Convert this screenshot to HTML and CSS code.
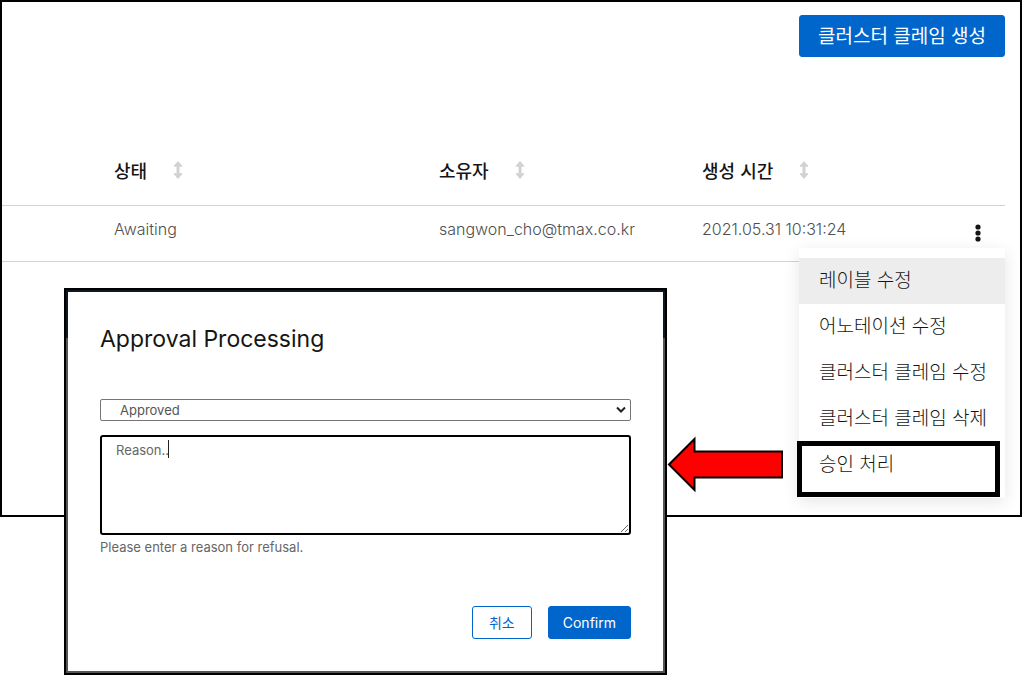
FILE: index.html
```html
<!DOCTYPE html>
<html lang="ko">
<head>
<meta charset="utf-8">
<meta name="viewport" content="width=device-width, initial-scale=1">
<title>클러스터 클레임</title>
<link rel="stylesheet" href="styles.css">
</head>
<body>
<main class="stage">
  <section class="panel">
    <div class="toolbar">
      <button class="btn btn-create" type="button">클러스터 클레임 생성</button>
    </div>
    <table class="claims">
      <colgroup><col class="col-lead"><col class="col-status"><col class="col-owner"><col><col class="col-menu"></colgroup>
      <thead>
        <tr>
          <th></th>
          <th scope="col"><span class="head">상태<svg class="sort" viewBox="0 0 10 18" aria-hidden="true"><path d="M5 .5 9 5.200H6V12.800H9L5 17.500 1 12.800H4V5.200H1Z"/></svg></span></th>
          <th scope="col"><span class="head">소유자<svg class="sort" viewBox="0 0 10 18" aria-hidden="true"><path d="M5 .5 9 5.200H6V12.800H9L5 17.500 1 12.800H4V5.200H1Z"/></svg></span></th>
          <th scope="col"><span class="head">생성 시간<svg class="sort" viewBox="0 0 10 18" aria-hidden="true"><path d="M5 .5 9 5.200H6V12.800H9L5 17.500 1 12.800H4V5.200H1Z"/></svg></span></th>
          <th></th>
        </tr>
      </thead>
      <tbody>
        <tr>
          <td></td>
          <td>Awaiting</td>
          <td>sangwon_cho@tmax.co.kr</td>
          <td>2021.05.31 10:31:24</td>
          <td class="actions">
            <button class="kebab" type="button" aria-label="작업"><svg viewBox="0 0 6 18" aria-hidden="true"><circle cx="3" cy="3" r="2.600"/><circle cx="3" cy="9" r="2.600"/><circle cx="3" cy="15" r="2.600"/></svg></button>
            <div class="menu">
              <button class="item item-hover" type="button">레이블 수정</button>
              <button class="item" type="button">어노테이션 수정</button>
              <button class="item" type="button">클러스터 클레임 수정</button>
              <button class="item" type="button">클러스터 클레임 삭제</button>
              <button class="item" type="button">승인 처리</button>
              <span class="marker"></span>
            </div>
          </td>
        </tr>
      </tbody>
    </table>
  </section>

  <svg class="arrow" viewBox="0 0 116 56" aria-hidden="true"><path d="M2 28.500 27.500 3V15.500H115V41.500H27.500V54Z"/></svg>

  <form class="dialog">
    <h1 class="title">Approval Processing</h1>
    <div class="select-wrap">
      <select class="select" aria-label="Approval"><option>Approved</option><option>Rejected</option></select>
      <svg class="chevron" viewBox="0 0 10 8" aria-hidden="true"><path d="M1 1.500 5 5.500 9 1.500"/></svg>
    </div>
    <div class="reason-wrap">
      <textarea class="reason" id="reason">Reason..</textarea>
      <span class="caret"></span>
    </div>
    <label class="hint" for="reason">Please enter a reason for refusal.</label>
    <div class="footer">
      <button class="btn btn-cancel" type="button">취소</button>
      <button class="btn btn-confirm" type="button">Confirm</button>
    </div>
  </form>
</main>
</body>
</html>
```
FILE: styles.css
```css
* { box-sizing: border-box; }

body {
  margin: 0;
  background: #fff;
  color: #151515;
  font-family: Inter, "Noto Sans CJK KR", sans-serif;
}

button, select, textarea { font: inherit; }

.stage { position: relative; min-height: 676px; }

.panel {
  min-height: 517px;
  padding: 13px 15px 0 0;
  border: 2px solid #000;
}

.toolbar { display: flex; justify-content: flex-end; }

.btn {
  border: 1px solid #06c;
  border-radius: 3px;
  background: #06c;
  color: #fff;
}

.btn-create {
  height: 42px;
  padding: 0 18px 2px;
  font: 400 19px/24px "Noto Sans CJK KR", sans-serif;
}

.claims {
  width: 100%;
  margin-top: 79px;
  table-layout: fixed;
  border-collapse: collapse;
}

.col-lead { width: 96px; }
.col-status { width: 325px; }
.col-owner { width: 263px; }
.col-menu { width: 54px; }

.claims th, .claims td {
  padding: 0 0 0 16px;
  border-bottom: 1px solid #d2d2d2;
  text-align: left;
  white-space: nowrap;
}

.claims th {
  height: 69px;
  font: 500 18px/24px "Noto Sans CJK KR", sans-serif;
}

.claims td {
  height: 56px;
  padding-bottom: 8px;
  color: #4f4f4f;
  font-size: 16px;
  font-weight: 300;
}

.head { display: flex; align-items: center; gap: 26px; }
.sort { width: 10px; height: 18px; fill: #d2d2d2; stroke: #d2d2d2; stroke-linejoin: round; }

.claims .actions { position: relative; padding: 0; text-align: center; }

.kebab {
  padding: 4px 8px;
  border: 0;
  background: none;
  line-height: 0;
}

.kebab svg { width: 6px; height: 18px; fill: #151515; }

.menu {
  position: absolute;
  top: 42px;
  right: 0;
  padding: 10px 0;
  background: #fff;
  box-shadow: 0 4px 16px rgba(3, 3, 3, .1);
}

.item {
  display: block;
  width: 100%;
  height: 46px;
  padding: 0 18px 3px 20px;
  border: 0;
  background: #fff;
  color: #151515;
  font: 300 19px/24px "Noto Sans CJK KR", sans-serif;
  text-align: left;
}

.item-hover { background: #ededed; }

.marker {
  position: absolute;
  left: -2px;
  right: 5px;
  bottom: 1px;
  height: 56px;
  border: 5px solid #000;
}

.arrow {
  position: absolute;
  top: 436px;
  left: 667px;
  width: 116px;
  height: 56px;
  fill: #f00;
  stroke: #000;
  stroke-width: 2;
}

.dialog {
  position: absolute;
  top: 288px;
  left: 64px;
  width: 59%;
  padding: 34px 34px 34px;
  border: 2px solid #000;
  background: #fff;
  box-shadow: inset 0 0 0 2px #555;
}

.dialog::before {
  content: "";
  position: absolute;
  inset: 0 0 auto;
  height: 46px;
  border: 2px solid #0f1722;
  border-bottom: 0;
}

.title { margin: 0; font-size: 23px; font-weight: 400; line-height: 30px; }

.select-wrap { position: relative; margin-top: 45px; }

.select {
  display: block;
  width: 100%;
  height: 22px;
  padding: 0 19px;
  border: 1px solid #767676;
  border-radius: 2px;
  background: #fff;
  color: #555;
  font-size: 13px;
  line-height: 20px;
  appearance: none;
}

.chevron {
  position: absolute;
  top: 7px;
  right: 5px;
  width: 10px;
  height: 8px;
  fill: none;
  stroke: #222;
  stroke-width: 2;
  pointer-events: none;
}

.reason-wrap { position: relative; margin-top: 14px; }

.reason {
  display: block;
  width: 100%;
  height: 100px;
  padding: 4px 14px;
  border: 2px solid #000;
  border-radius: 3px;
  background: #fff;
  color: #666;
  font-size: 13px;
  line-height: 18px;
  outline: 0;
  resize: both;
}

.caret {
  position: absolute;
  top: 5px;
  left: 68px;
  width: 1px;
  height: 18px;
  background: #222;
}

.hint { display: block; margin-top: 3px; color: #666; font-size: 13px; line-height: 18px; }

.footer { display: flex; justify-content: flex-end; gap: 16px; margin-top: 50px; }

.btn-cancel, .btn-confirm { height: 33px; font-size: 14px; line-height: 20px; }

.btn-cancel { padding: 0 16px; background: #fff; color: #06c; }

.btn-confirm { padding: 0 14px; }
```
